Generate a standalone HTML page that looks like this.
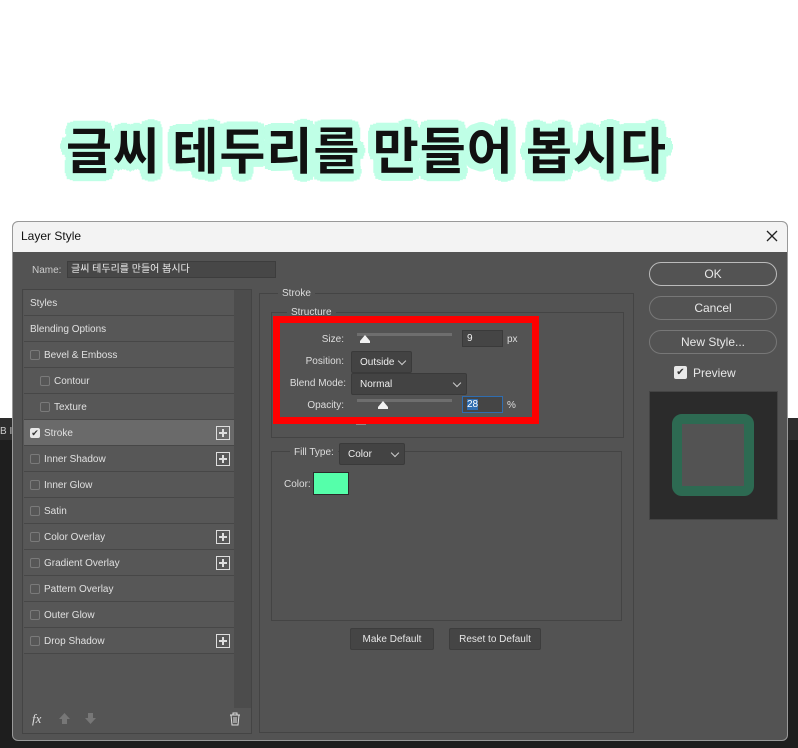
<!DOCTYPE html>
<html><head><meta charset="utf-8"><style>
*{margin:0;padding:0;box-sizing:border-box}
body{width:798px;height:748px;background:#fff;position:relative;overflow:hidden;font-family:"Liberation Sans","Noto Sans CJK KR",sans-serif;font-size:10px;color:#ddd}
.a{position:absolute}
.h{left:66px;top:112px;font-family:"Noto Sans CJK KR","NanumGothic",sans-serif;font-weight:bold;font-size:50px;color:#111;white-space:nowrap;letter-spacing:1px;
text-shadow:0 0 0 #bfffe6,4px 0 #bfffe6,-4px 0 #bfffe6,0 4px #bfffe6,0 -4px #bfffe6,3px 3px #bfffe6,-3px 3px #bfffe6,3px -3px #bfffe6,-3px -3px #bfffe6,6px 0 #bfffe6,-6px 0 #bfffe6,0 6px #bfffe6,0 -6px #bfffe6,5px 4px #bfffe6,-5px 4px #bfffe6,5px -4px #bfffe6,-5px -4px #bfffe6,4px 5px #bfffe6,-4px 5px #bfffe6,4px -5px #bfffe6,-4px -5px #bfffe6,8px 0 #bfffe6,-8px 0 #bfffe6,0 8px #bfffe6,0 -8px #bfffe6,6px 6px #bfffe6,-6px 6px #bfffe6,6px -6px #bfffe6,-6px -6px #bfffe6,7px 3px #bfffe6,-7px 3px #bfffe6,7px -3px #bfffe6,-7px -3px #bfffe6,3px 7px #bfffe6,-3px 7px #bfffe6,3px -7px #bfffe6,-3px -7px #bfffe6}
.row{position:absolute;left:24px;width:210px;height:26px;background:#575757;border-bottom:1px solid #474747;line-height:28px;font-size:10px;color:#e0e0e0}
.cb{position:absolute;width:10px;height:10px;border:1px solid #7a7a7a;border-radius:2px;top:8px}
.plus{position:absolute;right:4px;top:6px;width:14px;height:14px;border:1px solid #ddd;}
.plus:before{content:"";position:absolute;left:2px;top:5px;width:8px;height:2px;background:#ddd}
.plus:after{content:"";position:absolute;left:5px;top:2px;width:2px;height:8px;background:#ddd}
.btn{position:absolute;left:649px;width:128px;height:24px;border:1px solid #8a8a8a;border-radius:12px;text-align:center;line-height:23px;font-size:12px;color:#e8e8e8}
.frame{position:absolute;border:1px solid #444}
.lbl{position:absolute;font-size:10px;color:#ddd;text-align:right}
.sel{position:absolute;background:#434343;border:1px solid #3a3a3a;border-radius:2px;font-size:10px;color:#eee;padding-left:8px;line-height:22px}
.sel:after{content:"";position:absolute;right:6px;top:6px;width:5px;height:5px;border-right:1px solid #ccc;border-bottom:1px solid #ccc;transform:rotate(45deg)}
.inp{position:absolute;background:#454545;border:1px solid #3a3a3a;font-size:10px;color:#eee;padding-left:4px;line-height:16px}
.track{position:absolute;height:3px;background:#6e6e6e}
.gbtn{position:absolute;height:22px;background:#454545;border:1px solid #3d3d3d;border-radius:2px;text-align:center;line-height:22px;font-size:10px;color:#e6e6e6}
</style></head><body>
<div class="a h">글씨 테두리를 만들어 봅시다</div>
<div class="a" style="left:0;top:418px;width:798px;height:330px;background:#1e1e1e"></div>
<div class="a" style="left:0;top:418px;width:798px;height:22px;background:#2d2d2d"></div>
<div class="a" style="left:0;top:426px;font-size:10px;color:#ccc">B I</div>
<div class="a" style="left:12px;top:221px;width:776px;height:520px;background:#535353;border-radius:6px;overflow:hidden;border:1px solid #999">
 <div class="a" style="left:0;top:0;width:776px;height:30px;background:#f3f3f3;color:#111;font-size:12px;line-height:29px;padding-left:8px">Layer Style</div>
 <svg class="a" style="right:9px;top:8px" width="12" height="12"><path d="M1 1L11 11M11 1L1 11" stroke="#222" stroke-width="1.3"/></svg>
</div>
<div class="a" style="left:32px;top:265px;font-size:10px;color:#ccc">Name:</div>
<div class="a" style="left:67px;top:261px;width:209px;height:17px;background:#474747;border:1px solid #3d3d3d;font-size:10px;color:#eee;padding-left:3px;line-height:15px">글씨 테두리를 만들어 봅시다</div>
<div class="a" style="left:22px;top:289px;width:230px;height:445px;border:1px solid #444;background:#555"></div>
<div class="a" style="left:234px;top:290px;width:17px;height:418px;background:#4c4c4c"></div>
<div class="row" style="top:290px;padding-left:6px">Styles</div>
<div class="row" style="top:316px;padding-left:6px">Blending Options</div>
<div class="row" style="top:342px;padding-left:20px"><span class="cb" style="left:6px"></span>Bevel &amp; Emboss</div>
<div class="row" style="top:368px;padding-left:30px"><span class="cb" style="left:16px"></span>Contour</div>
<div class="row" style="top:394px;padding-left:30px"><span class="cb" style="left:16px"></span>Texture</div>
<div class="row" style="top:420px;padding-left:20px;background:#6a6a6a"><span class="cb" style="left:6px;background:#e8e8e8;border-color:#e8e8e8;color:#333;font-size:9px;line-height:8px;text-align:center">✔</span>Stroke<span class="plus"></span></div>
<div class="row" style="top:446px;padding-left:20px"><span class="cb" style="left:6px"></span>Inner Shadow<span class="plus"></span></div>
<div class="row" style="top:472px;padding-left:20px"><span class="cb" style="left:6px"></span>Inner Glow</div>
<div class="row" style="top:498px;padding-left:20px"><span class="cb" style="left:6px"></span>Satin</div>
<div class="row" style="top:524px;padding-left:20px"><span class="cb" style="left:6px"></span>Color Overlay<span class="plus"></span></div>
<div class="row" style="top:550px;padding-left:20px"><span class="cb" style="left:6px"></span>Gradient Overlay<span class="plus"></span></div>
<div class="row" style="top:576px;padding-left:20px"><span class="cb" style="left:6px"></span>Pattern Overlay</div>
<div class="row" style="top:602px;padding-left:20px"><span class="cb" style="left:6px"></span>Outer Glow</div>
<div class="row" style="top:628px;padding-left:20px"><span class="cb" style="left:6px"></span>Drop Shadow<span class="plus"></span></div>
<div class="a" style="left:32px;top:711px;font-style:italic;font-size:13px;color:#ddd;font-family:'Liberation Serif',serif">fx</div>
<svg class="a" style="left:58px;top:712px" width="13" height="13"><path d="M6.5 1L12 7H9V12H4V7H1Z" fill="#777"/></svg>
<svg class="a" style="left:84px;top:712px" width="13" height="13"><path d="M6.5 12L12 6H9V1H4V6H1Z" fill="#777"/></svg>
<svg class="a" style="left:229px;top:712px" width="12" height="14" viewBox="0 0 12 14"><path d="M1 3H11M4 3V1H8V3M2 3L3 13H9L10 3M5 5V11M7 5V11" stroke="#ddd" fill="none"/></svg>
<div class="frame" style="left:259px;top:293px;width:375px;height:440px"></div>
<div class="a" style="left:278px;top:288px;background:#535353;padding:0 4px;font-size:10px">Stroke</div>
<div class="frame" style="left:271px;top:312px;width:353px;height:126px"></div>
<div class="a" style="left:287px;top:307px;background:#535353;padding:0 4px;font-size:10px">Structure</div>
<div class="lbl" style="left:280px;width:64px;top:334px">Size:</div>
<div class="track" style="left:357px;top:333px;width:95px"></div>
<svg class="a" style="left:358px;top:334px" width="14" height="10"><path d="M7 1L12 7V9H2V7Z" fill="#f2f2f2"/></svg>
<div class="inp" style="left:462px;top:330px;width:41px;height:17px">9</div>
<div class="a" style="left:507px;top:334px">px</div>
<div class="lbl" style="left:280px;width:64px;top:356px">Position:</div>
<div class="sel" style="left:351px;top:351px;width:61px;height:22px">Outside</div>
<div class="lbl" style="left:280px;width:66px;top:378px">Blend Mode:</div>
<div class="sel" style="left:351px;top:373px;width:116px;height:22px">Normal</div>
<div class="lbl" style="left:280px;width:64px;top:400px">Opacity:</div>
<div class="track" style="left:357px;top:399px;width:95px"></div>
<svg class="a" style="left:376px;top:400px" width="14" height="10"><path d="M7 1L12 7V9H2V7Z" fill="#f2f2f2"/></svg>
<div class="inp" style="left:462px;top:396px;width:41px;height:17px;border-color:#2f6db0"><span style="background:#2f6db0;color:#fff">28</span></div>
<div class="a" style="left:507px;top:400px">%</div>
<div class="a" style="left:356px;top:419px;width:10px;height:6px;border:1px solid #888;border-top:none"></div>
<div class="a" style="left:273px;top:316px;width:266px;height:108px;border:7px solid #f00"></div>
<div class="frame" style="left:271px;top:451px;width:351px;height:170px"></div>
<div class="a" style="left:290px;top:447px;background:#535353;padding:0 4px;font-size:10px">Fill Type:</div>
<div class="sel" style="left:339px;top:443px;width:66px;height:22px">Color</div>
<div class="a" style="left:284px;top:479px">Color:</div>
<div class="a" style="left:313px;top:472px;width:36px;height:23px;background:#55ffaa;border:1px solid #2a2a2a"></div>
<div class="gbtn" style="left:350px;top:628px;width:84px">Make Default</div>
<div class="gbtn" style="left:449px;top:628px;width:92px">Reset to Default</div>
<div class="btn" style="top:262px;border-color:#bbb">OK</div>
<div class="btn" style="top:296px;border-color:#777">Cancel</div>
<div class="btn" style="top:330px;border-color:#777">New Style...</div>
<div class="a" style="left:674px;top:366px;width:13px;height:13px;background:#e8e8e8;border-radius:2px;color:#333;font-size:10px;line-height:13px;text-align:center">✔</div>
<div class="a" style="left:693px;top:366px;font-size:12px;color:#e8e8e8">Preview</div>
<div class="a" style="left:649px;top:391px;width:129px;height:129px;background:#2b2b2b;border:1px solid #444"></div>
<div class="a" style="left:672px;top:414px;width:82px;height:82px;background:#535353;border:10px solid #2d6a52;border-radius:10px"></div>
</body></html>
